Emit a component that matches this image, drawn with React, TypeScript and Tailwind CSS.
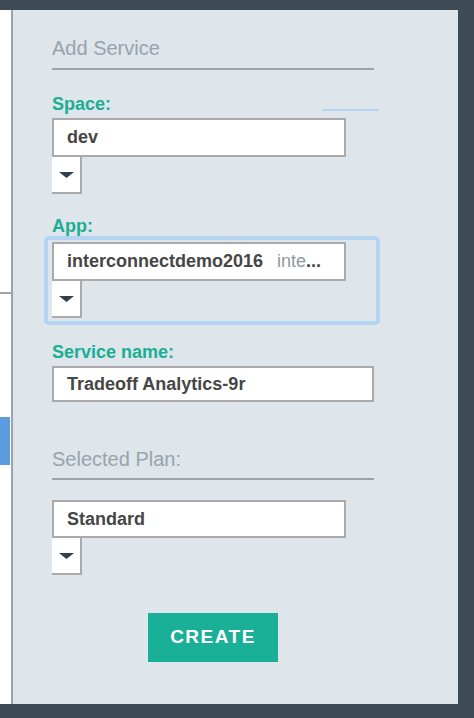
import React from "react";

const font = { fontFamily: '"Liberation Sans", Arial, sans-serif' };

function Arrow() {
  return (
    <div className="flex h-[37px] w-[30px] items-center justify-center border-r-2 border-b-2 border-[#aaaaaa] bg-white pl-[1px]">
      <svg width="15" height="6" viewBox="0 0 15 6">
        <path d="M0 0 H15 L7.5 6 Z" fill="#343f47" />
      </svg>
    </div>
  );
}

function Label({ children }: { children: React.ReactNode }) {
  return <div className="h-[20px] text-[18px] leading-[20px] font-bold text-[#1aaf93]">{children}</div>;
}

function Box({ children, w = "w-[294px]", h = "h-[39px]" }: { children: React.ReactNode; w?: string; h?: string }) {
  return (
    <div className={`${w} ${h} flex items-center border-2 border-[#aaaaaa] bg-white pl-[13px] text-[18px] font-bold text-[#464646] whitespace-nowrap overflow-hidden`}>
      {children}
    </div>
  );
}

export default function App() {
  return (
    <div className="flex h-[718px] w-[474px] flex-col bg-[#3c4b55]" style={font}>
      <div className="h-[10px]" />
      <div className="flex flex-1">
        {/* left strip */}
        <div className="flex w-[11px] flex-col bg-white">
          <div className="mt-[282px] h-[1.5px] bg-[#9aa3a9]" />
          <div className="mt-[123px] h-[48px] w-[10px] bg-[#5b9be0]" />
        </div>

        {/* panel */}
        <div className="flex flex-1 flex-col border-l-2 border-[#9aa3a9] bg-[#dee5eb] pl-[39px]">
          <div className="mt-[27px] w-[322px] border-b-2 border-[#9aa3a9] pb-[9px] text-[20px] leading-[22px] text-[#98a3ab]">
            Add Service
          </div>

          <div className="relative mt-[24px] w-[322px]">
            <Label>Space:</Label>
            <div className="absolute right-[-5px] top-[15px] h-[1.5px] w-[57px] rounded-r-full bg-[#b3d4f5]" />
          </div>
          <div className="mt-[4px]">
            <Box>dev</Box>
            <Arrow />
          </div>

          <div className="mt-[22px]">
            <Label>App:</Label>
          </div>
          <div className="-ml-[8px] w-[336px] rounded-[5px] border-[4px] border-[#b4d4f4] pl-[4px] pt-[2px] pb-[3px]">
            <Box>
              <span>interconnectdemo2016</span>
              <span className="ml-[14px] font-normal text-[#8e9aa3]">inte</span>
              <span>...</span>
            </Box>
            <Arrow />
          </div>

          <div className="mt-[17px]">
            <Label>Service name:</Label>
          </div>
          <div className="mt-[4px]">
            <Box w="w-[322px]" h="h-[36px]">Tradeoff Analytics-9r</Box>
          </div>

          <div className="mt-[46px] w-[322px] border-b-2 border-[#9aa3a9] pb-[8px] text-[20px] leading-[22px] text-[#98a3ab]">
            Selected Plan:
          </div>

          <div className="mt-[20px]">
            <Box h="h-[38px]">Standard</Box>
            <Arrow />
          </div>

          <div className="mt-[38px] flex w-[322px] justify-center">
            <button className="flex h-[49px] w-[130px] items-center justify-center bg-[#1ab097] text-[19px] font-bold tracking-[1.5px] text-white">
              CREATE
            </button>
          </div>
        </div>

        {/* right strip */}
        <div className="w-[16px]" />
      </div>
      <div className="h-[14px]" />
    </div>
  );
}
